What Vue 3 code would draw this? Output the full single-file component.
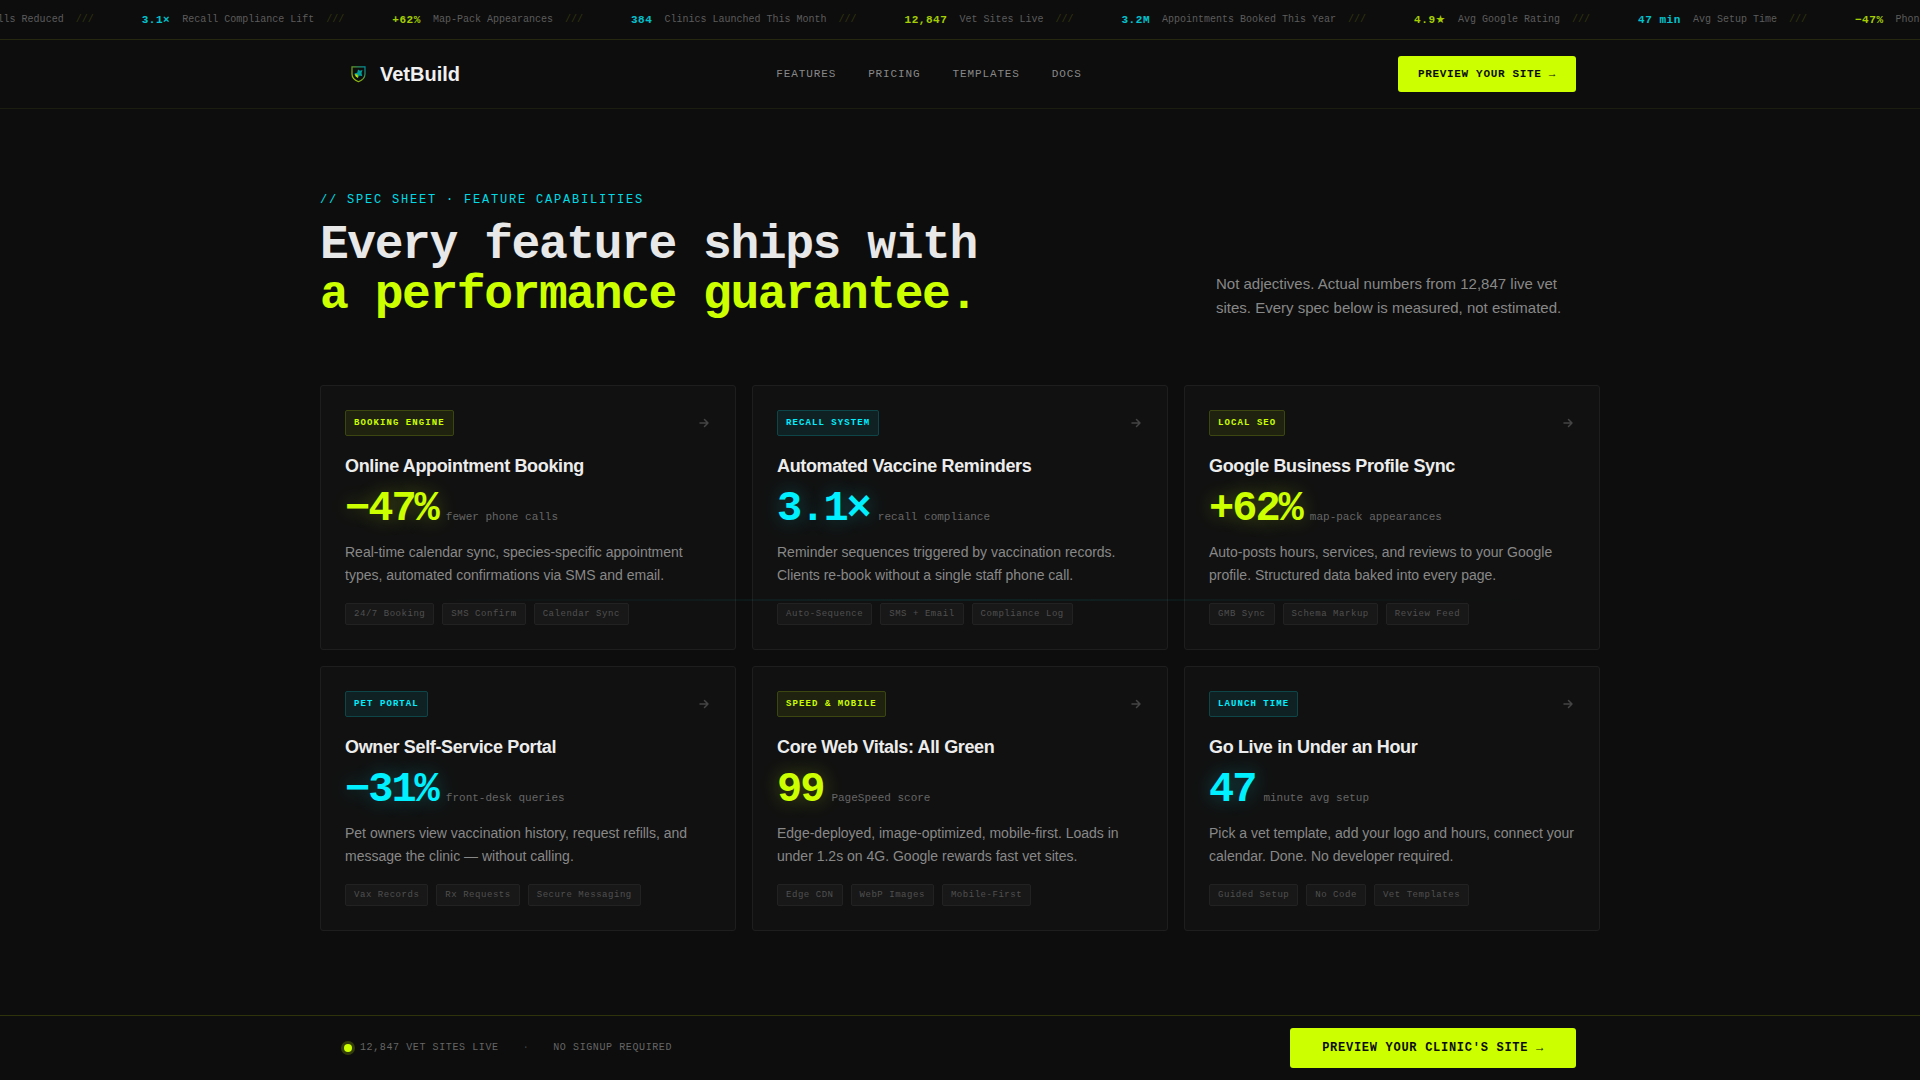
<script setup>
const metrics = [
  { value: '−47%', label: 'Phone Calls Reduced' },
  { value: '3.1×', label: 'Recall Compliance Lift' },
  { value: '+62%', label: 'Map-Pack Appearances' },
  { value: '384', label: 'Clinics Launched This Month' },
  { value: '12,847', label: 'Vet Sites Live' },
  { value: '3.2M', label: 'Appointments Booked This Year' },
  { value: '4.9★', label: 'Avg Google Rating' },
  { value: '47 min', label: 'Avg Setup Time' },
]
// One extra metric keeps the strip filled past the right edge.
const ticker = [...metrics, metrics[0]]

const links = ['Features', 'Pricing', 'Templates', 'Docs']

const features = [
  {
    tone: 'lime', badge: 'Booking Engine', title: 'Online Appointment Booking',
    stat: '−47%', unit: 'fewer phone calls',
    text: 'Real-time calendar sync, species-specific appointment types, automated confirmations via SMS and email.',
    tags: ['24/7 Booking', 'SMS Confirm', 'Calendar Sync'],
  },
  {
    tone: 'cyan', badge: 'Recall System', title: 'Automated Vaccine Reminders',
    stat: '3.1×', unit: 'recall compliance',
    text: 'Reminder sequences triggered by vaccination records. Clients re-book without a single staff phone call.',
    tags: ['Auto-Sequence', 'SMS + Email', 'Compliance Log'],
  },
  {
    tone: 'lime', badge: 'Local SEO', title: 'Google Business Profile Sync',
    stat: '+62%', unit: 'map-pack appearances',
    text: 'Auto-posts hours, services, and reviews to your Google profile. Structured data baked into every page.',
    tags: ['GMB Sync', 'Schema Markup', 'Review Feed'],
  },
  {
    tone: 'cyan', badge: 'Pet Portal', title: 'Owner Self-Service Portal',
    stat: '−31%', unit: 'front-desk queries',
    text: 'Pet owners view vaccination history, request refills, and message the clinic — without calling.',
    tags: ['Vax Records', 'Rx Requests', 'Secure Messaging'],
  },
  {
    tone: 'lime', badge: 'Speed & Mobile', title: 'Core Web Vitals: All Green',
    stat: '99', unit: 'PageSpeed score',
    text: 'Edge-deployed, image-optimized, mobile-first. Loads in under 1.2s on 4G. Google rewards fast vet sites.',
    tags: ['Edge CDN', 'WebP Images', 'Mobile-First'],
  },
  {
    tone: 'cyan', badge: 'Launch Time', title: 'Go Live in Under an Hour',
    stat: '47', unit: 'minute avg setup',
    text: 'Pick a vet template, add your logo and hours, connect your calendar. Done. No developer required.',
    tags: ['Guided Setup', 'No Code', 'Vet Templates'],
  },
]
</script>

<template>
  <div class="page">
    <div class="ticker">
      <div class="track">
        <div v-for="(m, i) in ticker" :key="i" class="metric">
          <strong :class="i % 2 ? 'cyan' : 'lime'">{{ m.value }}</strong>
          <span class="metric-label">{{ m.label }}</span>
          <span class="slashes">///</span>
        </div>
      </div>
    </div>

    <header class="header">
      <div class="bar">
        <a class="brand" href="#">
          <svg class="logo" viewBox="0 0 28 28" fill="none" aria-hidden="true">
            <defs>
              <linearGradient id="shield" x1="7" y1="20" x2="21" y2="8" gradientUnits="userSpaceOnUse">
                <stop offset="0" stop-color="#a8cc00" />
                <stop offset="0.5" stop-color="#6a9a20" />
                <stop offset="1" stop-color="#008f9c" />
              </linearGradient>
            </defs>
            <path d="M8 6.800h13v7.200c0 3.800-2.700 6.200-6.500 7.700C10.700 20.200 8 17.800 8 14z" stroke="url(#shield)" stroke-width="1.200" />
            <path d="M14 9.500l-.8 3.300-3 .7 2.800 1.500.5 3 2-2.500 2.800.8-.8-3.300 1-3-2.500.8z" fill="#009c98" />
            <path d="M10.500 14l3 .6.700 3.400-2.400-1.200z" fill="#b4e000" />
          </svg>
          <span>VetBuild</span>
        </a>
        <nav class="nav">
          <a v-for="l in links" :key="l" href="#">{{ l }}</a>
        </nav>
        <button class="cta cta-small" type="button">Preview your site →</button>
      </div>
    </header>

    <main class="main">
      <p class="eyebrow">// Spec Sheet · Feature Capabilities</p>
      <div class="intro">
        <h1>Every feature ships with<br /><em>a performance guarantee.</em></h1>
        <p class="lede">Not adjectives. Actual numbers from 12,847 live vet sites. Every spec below is measured, not estimated.</p>
      </div>

      <div class="grid">
        <article v-for="f in features" :key="f.badge" class="card" :class="f.tone">
          <div class="card-top">
            <span class="badge">{{ f.badge }}</span>
            <svg class="arrow" viewBox="0 0 14 14" fill="none" stroke="currentColor" stroke-width="1.500" stroke-linecap="round" stroke-linejoin="round" aria-hidden="true">
              <path d="M3 7h8M7.500 3.500L11 7l-3.500 3.500" />
            </svg>
          </div>
          <h2>{{ f.title }}</h2>
          <div class="stat"><strong>{{ f.stat }}</strong><span>{{ f.unit }}</span></div>
          <p class="copy">{{ f.text }}</p>
          <ul class="tags">
            <li v-for="t in f.tags" :key="t">{{ t }}</li>
          </ul>
        </article>
      </div>
    </main>

    <footer class="dock">
      <div class="bar">
        <div class="status">
          <span class="live"><i class="dot"></i>12,847 vet sites live</span>
          <span class="sep">·</span>
          <span>No signup required</span>
        </div>
        <button class="cta cta-large" type="button">Preview your clinic's site →</button>
      </div>
    </footer>

    <div class="scan"></div>
  </div>
</template>

<style>
body {
  margin: 0;
  background: #0d0d0d;
}
</style>

<style scoped>
.page {
  --lime: #ccff00;
  --cyan: #00f0ff;
  --mono: "Liberation Mono", "Courier New", "DejaVu Sans", monospace;
  position: relative;
  min-height: 100vh;
  box-sizing: border-box;
  padding-bottom: 65px;
  background: #0d0d0d;
  color: #e8e8e8;
  font-family: "Liberation Sans", Arial, sans-serif;
  overflow: hidden;
}

a {
  color: inherit;
  text-decoration: none;
}

.ticker {
  display: flex;
  align-items: center;
  height: 39px;
  overflow: hidden;
  border-bottom: 1px solid #26280f;
  font-family: var(--mono);
}

.track {
  display: flex;
  gap: 48px;
  margin-left: -91px;
  white-space: nowrap;
}

.metric {
  display: flex;
  align-items: center;
  gap: 12px;
  font-size: 10px;
  line-height: 16px;
}

.metric strong {
  font-size: 11px;
  line-height: 18px;
  letter-spacing: 0.05em;
}

.metric strong.lime {
  color: var(--lime);
  opacity: 0.8;
}

.metric strong.cyan {
  color: var(--cyan);
  opacity: 0.8;
}

.metric-label {
  color: #5c5c5c;
}

.slashes {
  color: #30360e;
}

.header {
  border-bottom: 1px solid #1b1d10;
}

.bar {
  display: flex;
  align-items: center;
  justify-content: space-between;
  max-width: 1232px;
  margin: 0 auto;
  padding: 0 24px;
}

.header .bar {
  height: 68px;
}

.brand {
  display: flex;
  align-items: center;
  gap: 8px;
  font-size: 20px;
  font-weight: 700;
  color: #f0f0f0;
}

.logo {
  width: 28px;
  height: 28px;
}

.nav {
  display: flex;
  gap: 32px;
  font-family: var(--mono);
  font-size: 11px;
  letter-spacing: 0.08em;
  text-transform: uppercase;
  color: #888;
}

.cta {
  border: 0;
  border-radius: 3px;
  background: var(--lime);
  color: #0d0d0d;
  font-family: var(--mono);
  font-weight: 700;
  letter-spacing: 0.06em;
  text-transform: uppercase;
  white-space: nowrap;
  cursor: pointer;
}

.cta-small {
  height: 36px;
  padding: 0 20px;
  font-size: 11px;
}

.cta-large {
  height: 40px;
  padding: 0 32px;
  font-size: 12px;
}

.main {
  max-width: 1280px;
  margin: 0 auto;
  padding: 80px 0;
}

.eyebrow {
  margin: 0 0 9px;
  font-family: var(--mono);
  font-size: 12px;
  line-height: 22px;
  letter-spacing: 0.15em;
  text-transform: uppercase;
  color: var(--cyan);
  opacity: 0.9;
}

.intro {
  display: flex;
  align-items: flex-end;
  justify-content: space-between;
  margin-bottom: 65px;
}

h1 {
  margin: 0;
  font-family: var(--mono);
  font-size: 48px;
  line-height: 50px;
  letter-spacing: -0.03em;
}

h1 em {
  font-style: normal;
  color: var(--lime);
}

.lede {
  width: 360px;
  margin: 0 24px 0 0;
  font-size: 15px;
  line-height: 24px;
  color: #888;
}

.grid {
  display: grid;
  grid-template-columns: repeat(3, 1fr);
  gap: 16px;
}

.card {
  padding: 24px;
  border: 1px solid #1e1e1e;
  border-radius: 3px;
  background: #111;
}

.card.lime {
  --tone: var(--lime);
  --tone-bg: #1e220f;
  --tone-line: #3b4610;
  --glow: rgba(204, 255, 0, 0.3);
}

.card.cyan {
  --tone: var(--cyan);
  --tone-bg: #0f2123;
  --tone-line: #0e4549;
  --glow: rgba(0, 240, 255, 0.3);
}

.card-top {
  display: flex;
  align-items: center;
  justify-content: space-between;
  margin-bottom: 16px;
}

.badge {
  padding: 4px 8px;
  border: 1px solid var(--tone-line);
  border-radius: 2px;
  background: var(--tone-bg);
  color: var(--tone);
  font-family: var(--mono);
  font-size: 9px;
  font-weight: 700;
  line-height: 16px;
  letter-spacing: 0.12em;
  text-transform: uppercase;
}

.arrow {
  width: 14px;
  height: 14px;
  color: #444;
}

h2 {
  margin: 0 0 8px;
  font-size: 18px;
  line-height: 28px;
  letter-spacing: -0.02em;
  color: #ececec;
}

.stat {
  display: flex;
  align-items: baseline;
  gap: 8px;
  height: 42px;
  margin-bottom: 11px;
  font-family: var(--mono);
}

.stat strong {
  font-size: 42px;
  line-height: 42px;
  letter-spacing: -2px;
  color: var(--tone);
  text-shadow: 0 0 20px var(--glow);
}

.stat span {
  font-size: 11px;
  color: #666;
}

.copy {
  margin: 0 0 16px;
  font-size: 14px;
  line-height: 23px;
  color: #888;
}

.tags {
  display: flex;
  gap: 8px;
  margin: 0;
  padding: 0;
  list-style: none;
}

.tags li {
  padding: 2px 8px;
  border: 1px solid #222;
  border-radius: 2px;
  background: #181818;
  color: #505050;
  font-family: var(--mono);
  font-size: 9px;
  line-height: 16px;
  letter-spacing: 0.06em;
}

.dock {
  position: fixed;
  right: 0;
  bottom: 0;
  left: 0;
  border-top: 1px solid #2e330c;
  background: #0d0d0d;
}

.dock .bar {
  height: 64px;
}

.status {
  display: flex;
  align-items: center;
  gap: 24px;
  font-family: var(--mono);
  font-size: 10px;
  line-height: 16px;
  letter-spacing: 0.06em;
  text-transform: uppercase;
  color: #666;
}

.live {
  display: flex;
  align-items: center;
  gap: 8px;
}

.dot {
  width: 8px;
  height: 8px;
  border-radius: 50%;
  background: var(--lime);
  box-shadow: 0 0 0 3px rgba(204, 255, 0, 0.2);
}

.sep {
  color: #444;
}

.scan {
  position: fixed;
  top: 599px;
  right: 0;
  left: 0;
  height: 2px;
  background: linear-gradient(90deg, transparent 20%, rgba(0, 240, 255, 0.08) 50%, transparent 80%);
  pointer-events: none;
}
</style>
